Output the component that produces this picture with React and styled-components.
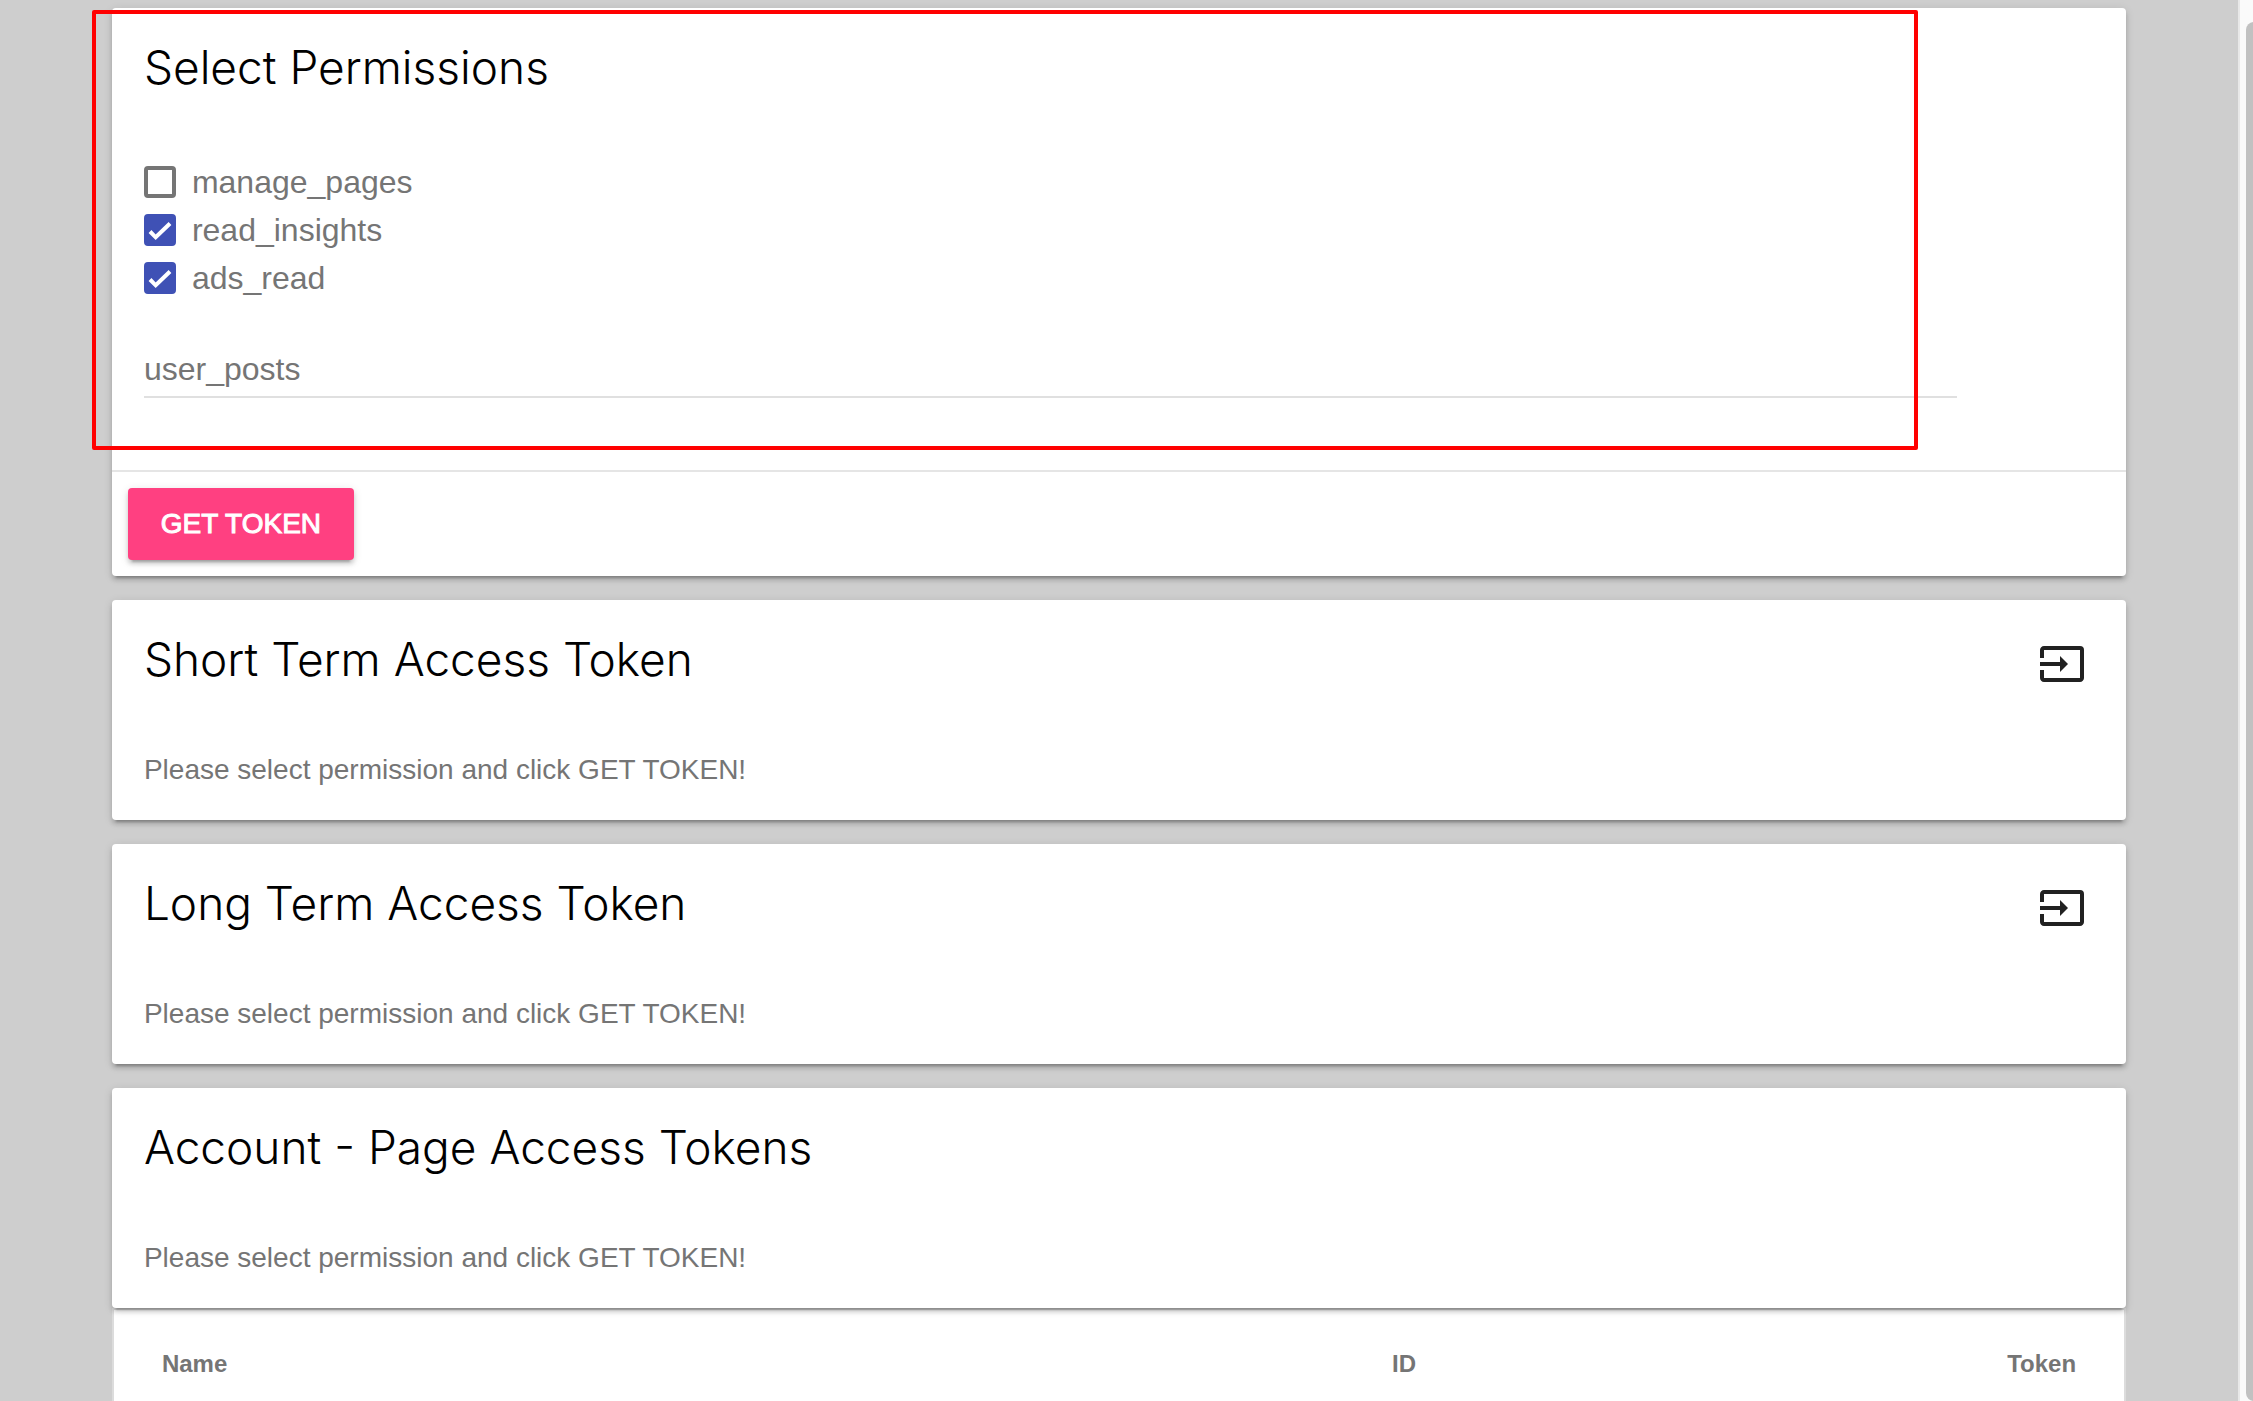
import React, { useId } from "react";
import styled, { createGlobalStyle } from "styled-components";
import { MdInput } from "react-icons/md";

const GlobalStyle = createGlobalStyle`
  *, *::before, *::after { box-sizing: border-box; }
  body {
    margin: 0;
    background: #cecece;
    color: #757575;
    font-family: "Liberation Sans", Helvetica, Arial, sans-serif;
  }
`;

const Page = styled.div`
  display: flex;
  height: 100vh;
  overflow: hidden;
`;

const Content = styled.main`
  flex: 1;
  min-width: 0;
  display: flex;
  flex-direction: column;
  align-items: center;
  padding-top: 8px;
  overflow: hidden;

  > * { flex: none; }
`;

const ScrollTrack = styled.div`
  flex: none;
  width: 15px;
  padding: 22px 0 0 6px;
  overflow: hidden;
  background: #fafafa;
  border-left: 2px solid #e8e8e8;
`;

const ScrollThumb = styled.div`
  width: 16px;
  height: 100%;
  border-radius: 8px;
  background: #c1c1c1;
`;

const Card = styled.section`
  position: relative;
  z-index: 1;
  width: 90%;
  margin-bottom: ${(p) => (p.$joined ? "0" : "24px")};
  border-radius: 4px;
  background: #fff;
  box-shadow: 0 4px 4px rgba(0, 0, 0, 0.14), 0 6px 2px -4px rgba(0, 0, 0, 0.2),
    0 2px 10px rgba(0, 0, 0, 0.12);
`;

const CardHeader = styled.header`
  display: flex;
  justify-content: space-between;
  align-items: flex-start;
  min-height: 120px;
  padding: 32px 32px 24px;
`;

const CardTitle = styled.h2`
  margin: 0;
  color: #000;
  font-family: Inter, "Liberation Sans", sans-serif;
  font-size: 46px;
  font-weight: 300;
  line-height: 54px;
`;

const IconButton = styled.button`
  display: flex;
  align-items: center;
  justify-content: center;
  width: 64px;
  height: 64px;
  padding: 0;
  border: 0;
  border-radius: 50%;
  background: none;
  color: #212121;
  font-size: 48px;
`;

const CardText = styled.p`
  margin: 0;
  padding: 32px;
  font-size: 28px;
  line-height: 36px;
`;

const PermissionArea = styled.div`
  position: relative;
`;

const Highlight = styled.div`
  position: absolute;
  top: 2px;
  right: 208px;
  bottom: 20px;
  left: -20px;
  border: 4px solid #f00;
  border-radius: 2px;
  pointer-events: none;
`;

const PermissionForm = styled.div`
  width: 90%;
  margin-left: 32px;
  padding: 30px 0 72px;
`;

const CheckRow = styled.label`
  display: flex;
  align-items: center;
  gap: 16px;
  height: 48px;
  font-size: 32px;
  line-height: 48px;
`;

const CheckControl = styled.span`
  display: grid;
  width: 32px;
  height: 32px;

  > * { grid-area: 1 / 1; }
`;

const CheckInput = styled.input`
  appearance: none;
  width: 32px;
  height: 32px;
  margin: 0;
  border: 4px solid #757575;
  border-radius: 4px;

  &:checked {
    border-color: #3f51b5;
    background: #3f51b5;
  }
  & + svg { visibility: hidden; pointer-events: none; }
  &:checked + svg { visibility: visible; }
`;

const TextField = styled.input`
  display: block;
  width: 100%;
  height: 56px;
  margin-top: 40px;
  padding: 8px 0;
  border: 0;
  border-bottom: 2px solid #e0e0e0;
  background: none;
  color: #757575;
  font: inherit;
  font-size: 32px;
  outline: none;

  &::placeholder { color: #757575; opacity: 1; }
`;

const CardActions = styled.div`
  padding: 16px;
  border-top: 2px solid #e5e5e5;
`;

const RaisedButton = styled.button`
  display: block;
  min-width: 226px;
  height: 72px;
  padding: 0 32px;
  border: 0;
  border-radius: 4px;
  background: #ff4081;
  color: #fff;
  font: inherit;
  font-size: 28px;
  line-height: 72px;
  text-transform: uppercase;
  -webkit-text-stroke: 1px #fff;
  box-shadow: 0 4px 4px rgba(0, 0, 0, 0.14), 0 6px 2px -4px rgba(0, 0, 0, 0.2),
    0 2px 10px rgba(0, 0, 0, 0.12);
`;

const TokenTable = styled.table`
  width: 90%;
  table-layout: fixed;
  border: 2px solid #dcdcdc;
  border-spacing: 0;
  background: #fff;
`;

const HeadCell = styled.th`
  height: 96px;
  padding: 0 38px 18px;
  text-align: ${(p) => p.$align || "right"};
  vertical-align: bottom;
  font-size: 24px;
  font-weight: 700;
  line-height: 48px;

  &:first-child { padding-left: 48px; }
  &:last-child { padding-right: 48px; }
`;

function Permission({ name, checked }) {
  const id = useId();
  return (
    <CheckRow htmlFor={id}>
      <CheckControl>
        <CheckInput id={id} type="checkbox" defaultChecked={checked} />
        <svg width="32" height="32" viewBox="0 0 32 32" fill="none" aria-hidden="true">
          <path d="M6 17.5 L11.7 23.3 L26 9.5" stroke="#fff" strokeWidth="4" />
        </svg>
      </CheckControl>
      {name}
    </CheckRow>
  );
}

function TokenCard({ title, action, joined }) {
  return (
    <Card $joined={joined}>
      <CardHeader>
        <CardTitle>{title}</CardTitle>
        {action && (
          <IconButton type="button" aria-label={action}>
            <MdInput />
          </IconButton>
        )}
      </CardHeader>
      <CardText>Please select permission and click GET TOKEN!</CardText>
    </Card>
  );
}

export default function App() {
  return (
    <Page>
      <GlobalStyle />
      <Content>
        <Card>
          <PermissionArea>
            <CardHeader>
              <CardTitle>Select Permissions</CardTitle>
            </CardHeader>
            <PermissionForm>
              <Permission name="manage_pages" />
              <Permission name="read_insights" checked />
              <Permission name="ads_read" checked />
              <TextField type="text" placeholder="user_posts" aria-label="user_posts" />
            </PermissionForm>
            <Highlight />
          </PermissionArea>
          <CardActions>
            <RaisedButton type="button">Get Token</RaisedButton>
          </CardActions>
        </Card>
        <TokenCard title="Short Term Access Token" action="Use short term token" />
        <TokenCard title="Long Term Access Token" action="Use long term token" />
        <TokenCard title="Account - Page Access Tokens" joined />
        <TokenTable>
          <thead>
            <tr>
              <HeadCell scope="col" $align="left">Name</HeadCell>
              <HeadCell scope="col">ID</HeadCell>
              <HeadCell scope="col">Token</HeadCell>
            </tr>
          </thead>
        </TokenTable>
      </Content>
      <ScrollTrack>
        <ScrollThumb />
      </ScrollTrack>
    </Page>
  );
}
